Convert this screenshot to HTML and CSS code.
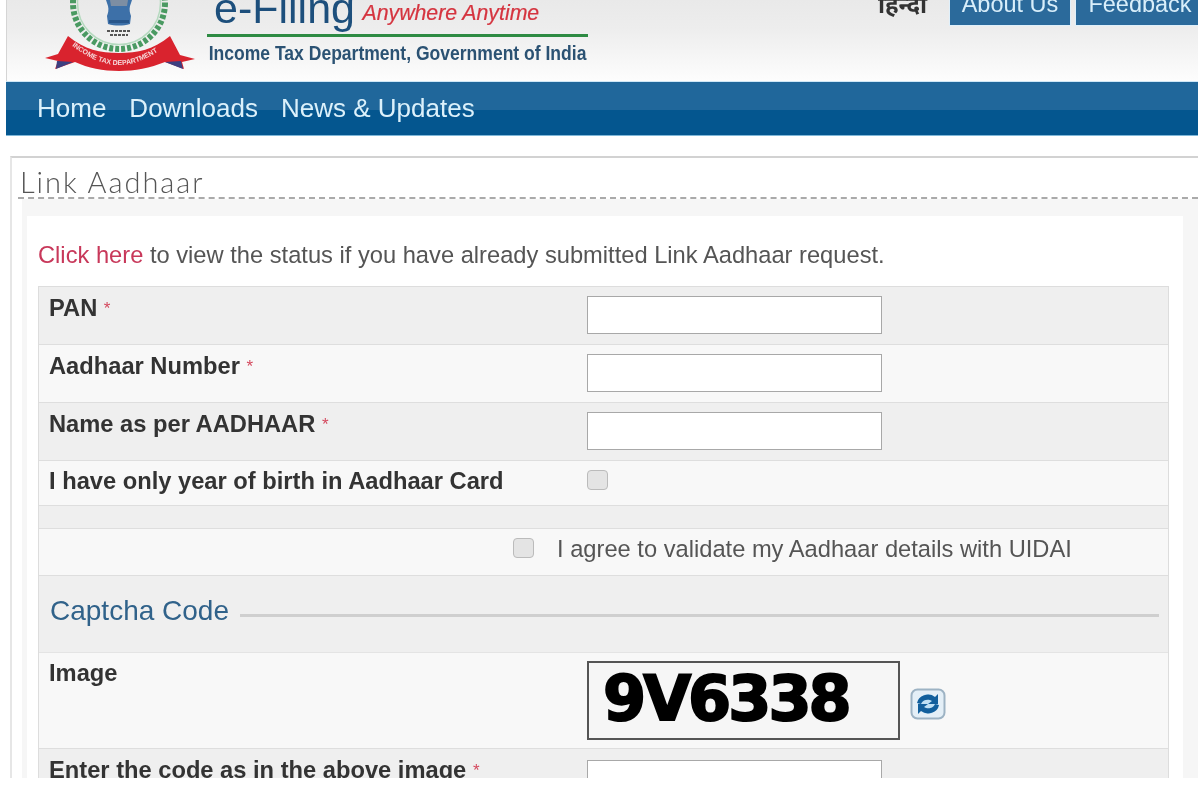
FILE: index.html
```html
<!DOCTYPE html>
<html lang="en">
<head>
<meta charset="utf-8">
<title>Link Aadhaar</title>
<link rel="stylesheet" href="styles.css">
</head>
<body>
<div class="page">
  <header class="header">
    <svg class="logo" width="160" height="81" viewBox="40 0 160 81" aria-hidden="true">
      <circle cx="119" cy="3" r="46" fill="none" stroke="#4a9a62" stroke-width="6" stroke-dasharray="4 2"/>
      <circle cx="119" cy="3" r="41.5" fill="none" stroke="#b5dabf" stroke-width="1.5"/>
      <path d="M106 0h26l-2 6c-1 4 0 7 1 10l-1 8c-7 2-15 2-22 0l-1-8c1-3 2-6 1-10z" fill="#3d70a8"/>
      <path d="M110 0h18l-1 6h-16z" fill="#7d8ea3"/>
      <path d="M109 20h20v3h-20z" fill="#27558a"/>
      <path d="M107 31h24M110 35h18" stroke="#555" stroke-width="2" stroke-dasharray="3 1"/>
      <path d="M68 36C85 50 100 53 119 53S153 50 170 36L180 55 195 59 182 62 184 69 165 62C150 68 135 71 119 71S88 68 75 62L55 69 58 61 45 58 58 54Z" fill="#d9232e"/>
      <path d="M57 61l16 1-17 7zM181 61l-16 1 18 7z" fill="#3c3f80"/>
      <path id="ribbon-curve" d="M71 45C88 58 103 65 119 65S150 58 167 45" fill="none"/>
      <text class="logo-text"><textPath href="#ribbon-curve" startOffset="1">INCOME TAX DEPARTMENT</textPath></text>
    </svg>
    <div class="brand">
      <div class="brand-top">
        <span class="brand-name">e-Filing</span>
        <span class="brand-tag">Anywhere Anytime</span>
      </div>
      <div class="brand-sub">Income Tax Department, Government of India</div>
    </div>
    <div class="top-links">
      <a class="hindi">हिन्दी</a>
      <a class="top-btn about">About Us</a>
      <a class="top-btn feedback">Feedback</a>
    </div>
  </header>

  <nav class="nav">
    <a>Home</a>
    <a>Downloads</a>
    <a>News &amp; Updates</a>
  </nav>

  <main class="panel">
    <h1 class="panel-title">Link Aadhaar</h1>
    <div class="panel-body">
      <div class="card">
        <p class="status"><a class="status-link">Click here</a> to view the status if you have already submitted Link Aadhaar request.</p>
        <div class="table">
          <div class="row row-dark row-58">
            <label class="label">PAN <span class="req">*</span></label>
            <input class="input" type="text">
          </div>
          <div class="row row-light row-58">
            <label class="label">Aadhaar Number <span class="req">*</span></label>
            <input class="input" type="text">
          </div>
          <div class="row row-dark row-58">
            <label class="label">Name as per AADHAAR <span class="req">*</span></label>
            <input class="input" type="text">
          </div>
          <div class="row row-light row-46">
            <label class="label">I have only year of birth in Aadhaar Card</label>
            <span class="check"></span>
          </div>
          <div class="row-spacer"></div>
          <div class="row-agree">
            <span class="check"></span>
            <span class="agree-text">I agree to validate my Aadhaar details with UIDAI</span>
          </div>
          <div class="row-section">
            <span class="section-title">Captcha Code</span>
            <span class="section-line"></span>
          </div>
          <div class="row row-light row-96">
            <label class="label">Image</label>
            <div class="captcha-wrap">
              <div class="captcha">9V6338</div>
              <svg class="refresh" width="36" height="32" viewBox="0 0 36 32" aria-hidden="true">
                <rect x="1.5" y="1.5" width="33" height="29" rx="6" fill="#e4eff7" stroke="#9db3c4" stroke-width="2"/>
                <circle cx="18" cy="16" r="10" fill="#bfe0f4"/>
                <path d="M7 15a11 10 0 0 1 18-6l3-3v10h-10l4-3a7 6 0 0 0-11 3z" fill="#125f9c"/>
                <path d="M29 17a11 10 0 0 1-18 6l-3 3v-10h10l-4 3a7 6 0 0 0 11-3z" fill="#125f9c"/>
              </svg>
            </div>
          </div>
          <div class="row row-dark row-58 row-last">
            <label class="label">Enter the code as in the above image <span class="req">*</span></label>
            <input class="input" type="text">
          </div>
        </div>
      </div>
    </div>
  </main>
</div>
</body>
</html>
```

FILE: styles.css
```css
* { box-sizing: border-box; }
html, body { margin: 0; padding: 0; background: #fff; }
body { font-family: "Liberation Sans", Arial, sans-serif; color: #333; }
.page {
  height: 778px;
  overflow: hidden;
  padding: 0 2px 0 6px;
  background: #fff;
  filter: blur(0.55px);
}

/* Header */
.header {
  display: flex;
  height: 81px;
  overflow: hidden;
  border-left: 1px solid #d5d5d5;
  background: linear-gradient(#e9e9e9, #ededed 35%, #fdfdfd);
}
.logo { flex: none; margin-left: 33px; }
.logo-text { font: bold 7px "Liberation Sans", sans-serif; fill: #f6d7d9; }
.brand { flex: none; width: 381px; margin-left: 7px; }
.brand-top {
  height: 46px;
  margin-top: -9px;
  padding-left: 7px;
  border-bottom: 3px solid #2e8b43;
  white-space: nowrap;
}
.brand-name { font-size: 43px; line-height: 34px; color: #1d4f7c; }
.brand-tag {
  margin-left: 3px;
  vertical-align: 3px;
  font-size: 21.3px;
  font-style: italic;
  color: #d5343f;
  -webkit-text-stroke: 0.2px #d5343f;
}
.brand-sub {
  margin-top: 4px;
  padding-left: 2px;
  font-size: 21px;
  font-weight: bold;
  color: #2b5273;
  white-space: nowrap;
  transform: scaleX(0.835);
  transform-origin: left center;
}
.top-links { display: flex; align-items: flex-start; margin-left: auto; }
.hindi {
  margin: -13px 23px 0 0;
  font-family: "Noto Sans", "Liberation Sans", sans-serif;
  font-size: 24px;
  font-weight: bold;
  color: #333;
}
.top-btn {
  height: 25px;
  line-height: 9px;
  font-size: 23.5px;
  text-align: center;
  color: #d8eefa;
  background: #2b6a9b;
  outline: 1px solid #dff0fb;
  white-space: nowrap;
}
.about { width: 120px; margin-right: 6px; }
.feedback { width: 122px; padding-left: 6px; }

/* Nav */
.nav {
  display: flex;
  align-items: center;
  gap: 23px;
  height: 55px;
  padding: 0 0 0 31px;
  background: linear-gradient(#20679b 0, #20679b 53%, #04568f 53%, #04568f 100%);
  border-top: 1px solid #cfe8f7;
  border-bottom: 1px solid #7fb7d8;
}
.nav a { font-size: 26px; color: #dcf1fb; }

/* Panel */
.panel {
  margin: 20px 0 0 4px;
  border-top: 2px solid #d2d2d2;
  border-left: 2px solid #e6e6e6;
}
.panel-title {
  margin: 0 0 0 6px;
  height: 41px;
  padding: 8px 0 0 2px;
  font-family: "Lato", sans-serif;
  font-size: 29px;
  line-height: 32px;
  font-weight: 300;
  letter-spacing: 1.95px;
  color: #555;
  border-bottom: 2px dashed #aaa;
}
.panel-body { padding: 17px 15px 0 15px; background: linear-gradient(90deg, #fff 10px, #f6f6f6 10px, #f6f6f6 100%); }
.card { padding: 0 14px 0 11px; background: #fff; }
.status {
  margin: 0;
  height: 70px;
  padding-top: 26px;
  font-size: 23.7px;
  line-height: 26px;
  color: #555;
  white-space: nowrap;
}
.status-link { color: #c8385a; }

/* Table */
.table { border-left: 1px solid #ddd; border-right: 1px solid #ddd; border-top: 1px solid #ddd; }
.row {
  display: grid;
  grid-template-columns: 548px 1fr;
  padding: 7px 0 0 10px;
  border-bottom: 1px solid #dedede;
}
.row-dark { background: #efefef; }
.row-light { background: #f8f8f8; }
.row-58 { height: 58px; padding-top: 8px; }
.row-46 { height: 45px; }
.row-96 { height: 96px; }
.row > .input, .row > .check, .row > .captcha-wrap { margin-left: -10px; }
.label {
  font-size: 23.7px;
  line-height: 26px;
  font-weight: bold;
  color: #333;
  white-space: nowrap;
}
.req { color: #d4495e; font-weight: normal; font-size: 17px; vertical-align: 2px; }
.input {
  width: 295px;
  height: 38px;
  margin-top: 1px;
  border: 1px solid #a8a8a8;
  background: #fff;
}
.row-last .input { margin-top: 3px; }
.check {
  display: block;
  width: 21px;
  height: 20px;
  margin-top: 2px;
  border: 1px solid #bbb;
  border-radius: 4px;
  background: #e4e4e4;
}
.row-spacer { height: 23px; background: #efefef; border-bottom: 1px solid #dedede; }
.row-agree {
  display: flex;
  align-items: center;
  gap: 23px;
  height: 47px;
  padding: 0 0 5px 474px;
  background: #f8f8f8;
  border-bottom: 1px solid #dedede;
}
.row-agree .check { margin: 0 0 4px; }
.agree-text { font-size: 23.7px; color: #555; white-space: nowrap; }
.row-section {
  display: flex;
  align-items: center;
  gap: 11px;
  height: 77px;
  padding: 0 9px 7px 11px;
  background: #efefef;
  border-bottom: 1px solid #e4e4e4;
}
.section-title { font-size: 28px; color: #30628a; white-space: nowrap; }
.section-line { flex: 1; height: 3px; margin-top: 9px; background: #cfcfcf; }
.captcha-wrap { display: flex; align-items: flex-end; gap: 10px; margin-top: 1px; align-self: start; }
.captcha {
  width: 313px;
  height: 79px;
  padding-left: 14px;
  border: 2px solid #555;
  background: #f6f6f6;
  font-family: "DejaVu Sans", sans-serif;
  font-size: 62px;
  line-height: 72px;
  font-weight: bold;
  letter-spacing: -3px;
  color: #000;
  -webkit-text-stroke: 2px #000;
}
.refresh { flex: none; margin-bottom: 20px; }
```
